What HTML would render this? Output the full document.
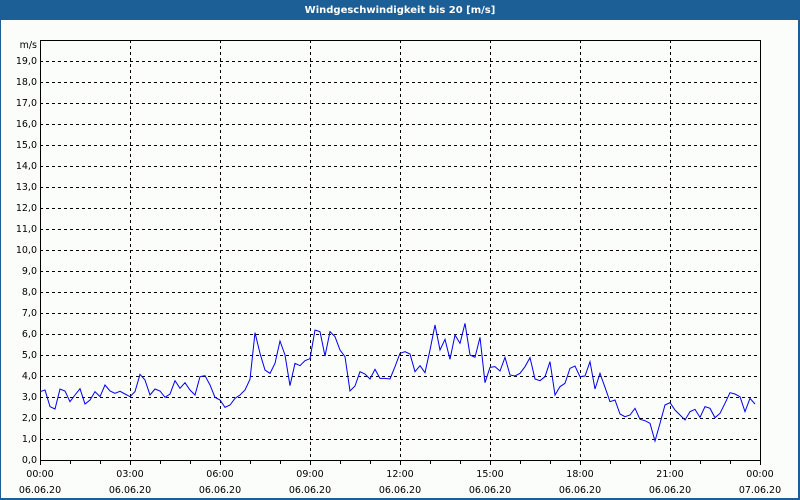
<!DOCTYPE html>
<html><head><meta charset="utf-8"><style>
html,body{margin:0;padding:0;background:#fff}
svg{display:block}
text{font-family:"DejaVu Sans","Liberation Sans",sans-serif;font-size:9.5px;fill:#000}
</style></head><body>
<svg width="800" height="500" xmlns="http://www.w3.org/2000/svg">
<rect x="0" y="0" width="800" height="500" fill="#1c5f96"/>
<rect x="1" y="20" width="797" height="478" fill="#fbfdfb"/>
<text x="400" y="13" text-anchor="middle" style="fill:#fff;font-weight:bold;font-size:10px">Windgeschwindigkeit bis 20 [m/s]</text>
<g stroke="#000" stroke-width="1" stroke-dasharray="3,3" shape-rendering="crispEdges">
<path d="M40 439.5H760M40 418.5H760M40 397.5H760M40 376.5H760M40 355.5H760M40 334.5H760M40 313.5H760M40 292.5H760M40 271.5H760M40 250.5H760M40 229.5H760M40 208.5H760M40 187.5H760M40 166.5H760M40 145.5H760M40 124.5H760M40 103.5H760M40 82.5H760M40 61.5H760"/>
<path d="M130.5 40V460M220.5 40V460M310.5 40V460M400.5 40V460M490.5 40V460M580.5 40V460M670.5 40V460"/>
</g>
<g stroke="#000" stroke-width="1" fill="none" shape-rendering="crispEdges">
<rect x="40.5" y="40.5" width="720" height="420"/>
<path d="M40.5 461V465M70.5 461V464M100.5 461V464M130.5 461V465M160.5 461V464M190.5 461V464M220.5 461V465M250.5 461V464M280.5 461V464M310.5 461V465M340.5 461V464M370.5 461V464M400.5 461V465M430.5 461V464M460.5 461V464M490.5 461V465M520.5 461V464M550.5 461V464M580.5 461V465M610.5 461V464M640.5 461V464M670.5 461V465M700.5 461V464M730.5 461V464M760.5 461V465"/>
</g>
<g fill="none" stroke="#0000ee" stroke-width="1">
<polyline transform="translate(40,310) scale(0.33333)" vector-effect="non-scaling-stroke" points="0,245 15,240 30,290 45,297 60,237 75,243 90,275 105,255 120,236 135,282 150,270 165,245 180,260 195,225 210,243 225,250 240,244 255,252 270,260 285,245 300,193 315,210 330,255 345,237 360,243 375,262 390,252 405,212 420,235 435,218 450,240 465,255 480,200 495,197 510,225 525,262 540,270 555,292 570,285 585,265 600,255 615,240 630,208 645,68 660,130 675,180 690,190 705,160 720,93 735,135 750,227 765,160 780,167 795,152 810,146 825,60 840,65 855,138 870,65 885,80 900,120 915,140 930,243 945,228 960,185 975,192 990,207 1005,178 1020,205 1035,205 1050,207 1065,170 1080,130"/>
<polyline transform="translate(400,310) scale(0.33333)" vector-effect="non-scaling-stroke" points="0,130 15,125 30,132 45,185 60,167 75,188 90,120 105,45 120,120 135,88 150,148 165,75 180,100 195,40 210,135 225,142 240,82 255,218 270,172 285,170 300,183 315,142 330,195 345,198 360,190 375,170 390,143 405,207 420,212 435,200 450,155 465,255 480,230 495,220 510,175 525,168 540,200 555,198 570,155 585,237 600,190 615,232 630,275 645,270 660,312 675,320 690,315 705,295 720,328 735,332 750,340 765,393 780,340 795,285 810,278 825,300 840,315 855,330 870,305 885,298 900,322 915,290 930,295 945,323 960,310 975,280 990,248 1005,252 1020,260 1035,305 1050,265 1065,282"/>
</g>
<g text-anchor="end">
<text x="37" y="48">m/s</text>
<text x="37" y="64">19,0</text><text x="37" y="85">18,0</text><text x="37" y="106">17,0</text><text x="37" y="127">16,0</text><text x="37" y="148">15,0</text><text x="37" y="169">14,0</text><text x="37" y="190">13,0</text><text x="37" y="211">12,0</text><text x="37" y="232">11,0</text><text x="37" y="253">10,0</text><text x="37" y="274">9,0</text><text x="37" y="295">8,0</text><text x="37" y="316">7,0</text><text x="37" y="337">6,0</text><text x="37" y="358">5,0</text><text x="37" y="379">4,0</text><text x="37" y="400">3,0</text><text x="37" y="421">2,0</text><text x="37" y="442">1,0</text><text x="37" y="463">0,0</text>
</g>
<g text-anchor="middle">
<text x="40" y="477">00:00</text><text x="130" y="477">03:00</text><text x="220" y="477">06:00</text><text x="310" y="477">09:00</text><text x="400" y="477">12:00</text><text x="490" y="477">15:00</text><text x="580" y="477">18:00</text><text x="670" y="477">21:00</text><text x="760" y="477">00:00</text>
<text x="40" y="493">06.06.20</text><text x="130" y="493">06.06.20</text><text x="220" y="493">06.06.20</text><text x="310" y="493">06.06.20</text><text x="400" y="493">06.06.20</text><text x="490" y="493">06.06.20</text><text x="580" y="493">06.06.20</text><text x="670" y="493">06.06.20</text><text x="760" y="493">07.06.20</text>
</g>
</svg>
</body></html>
